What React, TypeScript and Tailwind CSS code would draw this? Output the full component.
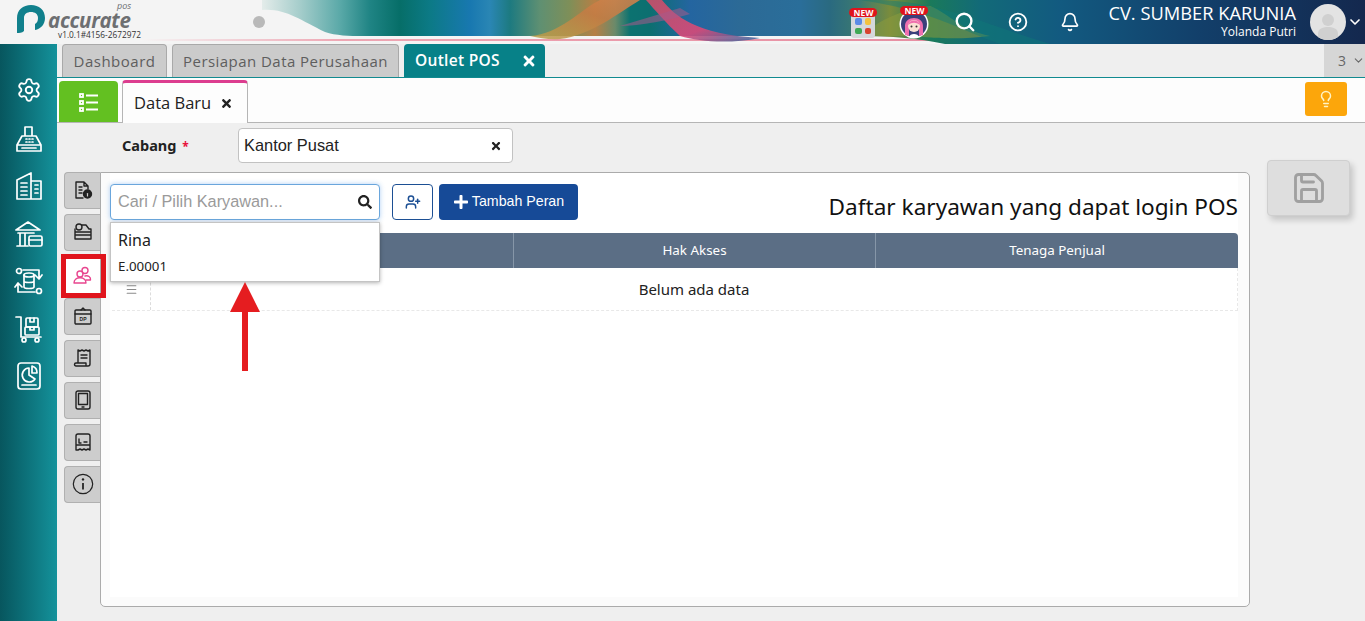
import { Bell, ChevronDown, CircleHelp, Lightbulb, Menu, Save, Search, Settings, UserPlus } from 'lucide-react'
import { FaPlus, FaSearch, FaTimes } from 'react-icons/fa'

const iconCls = 'h-[30px] w-[30px]'

const waveStops: [number, string][] = [
  [262, '#e4ecea'], [300, '#a5cdcb'], [340, '#5aa9a8'], [370, '#1f8484'], [400, '#066e68'],
  [430, '#0c7a86'], [470, '#1878b0'], [490, '#2a86b4'], [510, '#1d7a80'], [540, '#5f9072'],
  [570, '#7f8f58'], [595, '#b67f45'], [615, '#6b8a6a'], [630, '#0c7270'], [650, '#0c6f70'],
  [690, '#2465a0'], [740, '#2c6a96'], [800, '#2a6e9a'], [830, '#2a6a80'], [860, '#3c7a70'],
  [890, '#7a8c3c'], [930, '#1a7a5a'], [980, '#126a78'], [1060, '#125a80'], [1200, '#123f6a'], [1365, '#14284e'],
]

function HeaderWave() {
  return (
    <svg className="absolute inset-0 h-full w-full" viewBox="0 0 1365 44" preserveAspectRatio="none">
      <defs>
        <linearGradient id="wave" gradientUnits="userSpaceOnUse" x1="262" x2="1365" y1="0" y2="0">
          {waveStops.map(([x, c]) => (
            <stop key={x} offset={(x - 262) / (1365 - 262)} stopColor={c} />
          ))}
        </linearGradient>
        <linearGradient id="pinkLine" x1="0" x2="1" y1="0" y2="0">
          <stop offset="0" stopColor="#f5f5f5" />
          <stop offset="0.25" stopColor="#eea6b3" />
          <stop offset="1" stopColor="#e78ea2" />
        </linearGradient>
        <linearGradient id="orangeBand" x1="0" x2="1" y1="1" y2="0">
          <stop offset="0" stopColor="#b9a24a" />
          <stop offset="0.6" stopColor="#c47c44" />
          <stop offset="1" stopColor="#d9824a" />
        </linearGradient>
        <linearGradient id="pinkBand" x1="0" x2="1" y1="0" y2="1">
          <stop offset="0" stopColor="#c9506a" />
          <stop offset="0.6" stopColor="#d84a78" />
          <stop offset="1" stopColor="#2f6ea6" />
        </linearGradient>
      </defs>
      <rect width="1365" height="44" fill="#f4f4f4" />
      <rect x="140" y="39" width="810" height="2" fill="url(#pinkLine)" />
      <path d="M262 10 C285 8 300 20 325 32 C340 37 360 36 380 36 L860 36 C900 36 925 40 945 44 L1365 44 L1365 0 L262 0 Z" fill="url(#wave)" />
      <path d="M530 36 C560 34 580 10 600 0 L640 0 C620 12 590 36 560 39 C550 40 540 38 530 36 Z" fill="url(#orangeBand)" opacity="0.85" />
      <path d="M646 0 L662 0 C675 16 695 34 760 38 C730 44 700 42 680 36 C665 22 655 10 646 0 Z" fill="url(#pinkBand)" opacity="0.9" />
      <path d="M620 26 C640 20 660 14 680 8 L690 14 C670 20 640 26 620 26 Z" fill="#a85a8a" opacity="0.55" />
      <path d="M860 36 C880 20 900 10 930 6 C950 14 960 30 990 36 C960 40 930 38 915 36 Z" fill="#8c9a3c" opacity="0.55" />
      <path d="M880 0 C940 2 985 24 1050 44 L1000 44 C960 30 930 10 860 0 Z" fill="#0f7a78" opacity="0.45" />
    </svg>
  )
}

function Logo() {
  return (
    <div className="relative z-10 flex h-full w-[150px] shrink-0">
      <svg className="mt-1 ml-4 h-[29px] w-[30px]" viewBox="0 0 30 29">
        <path d="M1 29 L1 14 C1 6 7 1 15 1 C23 1 29 6 29 14 C29 20 25 25 19 26 L19 20 C21 19 22 17 22 14 C22 10 19 8 15 8 C11 8 8 10 8 14 L8 27 C6 29 3 29 1 29 Z" fill="#11808c" />
      </svg>
      <div className="relative ml-[2px] font-['Open_Sans',sans-serif] text-[#6d6f72]">
        <span className="absolute top-[1px] left-[69px] text-[9px] leading-[10px] italic">pos</span>
        <span className="absolute top-[11px] left-0 text-[20.5px] leading-[19px] font-bold italic tracking-[-0.3px]">accurate</span>
        <span className="absolute top-[30px] left-[10px] text-[8.3px] leading-[10px] whitespace-nowrap text-[#333]">v1.0.1#4156-2672972</span>
      </div>
    </div>
  )
}

function NewBadge() {
  return (
    <span className="absolute top-0 left-1/2 -translate-x-1/2 rounded-full bg-[#e0141c] px-[4px] font-['Open_Sans',sans-serif] text-[8.5px] leading-[9px] font-bold text-white">
      NEW
    </span>
  )
}

function HeaderBar() {
  return (
    <header className="relative flex h-11 shrink-0 items-center overflow-hidden">
      <HeaderWave />
      <Logo />
      <span className="relative ml-[103px] h-3 w-3 rounded-full bg-[#b9b9b9]" />
      <div className="relative ml-auto flex h-full items-center text-white">
        <div className="relative mt-[2px] flex h-[30px] w-[24px] items-end">
          <NewBadge />
          <div className="grid h-[24px] w-[24px] grid-cols-2 gap-[3px] rounded-[3px] bg-[#d5d8dc] p-[4px]">
            <span className="rounded-[2px] bg-[#5a8ae6]" />
            <span className="rounded-[2px] bg-[#f3c23e]" />
            <span className="rounded-[2px] bg-[#3fa855]" />
            <span className="rounded-[2px] bg-[#d8432f]" />
          </div>
        </div>
        <div className="relative mt-[2px] ml-[24px] h-[34px] w-[30px]">
          <svg className="absolute top-[3px] left-0 h-[30px] w-[30px]" viewBox="0 0 30 30">
            <circle cx="15" cy="15" r="14.5" fill="#fff" />
            <circle cx="15" cy="15" r="13" fill="#3b3f7a" />
            <path d="M6 18 C5 6 25 6 24 18 L24 26 L20 27 L20 16 L10 16 L10 27 L6 26 Z" fill="#ee6fae" />
            <circle cx="15" cy="17" r="6" fill="#fbe0d4" />
            <path d="M9 16 C10 10 20 10 21 16 C17 13 13 13 9 16 Z" fill="#ee6fae" />
            <path d="M10 28 C11 24 19 24 20 28 Z" fill="#fff" />
            <circle cx="12.5" cy="17.5" r="1" fill="#333" />
            <circle cx="17.5" cy="17.5" r="1" fill="#333" />
          </svg>
          <NewBadge />
        </div>
        <Search className="ml-[25px] h-[22px] w-[22px]" strokeWidth={2.6} />
        <CircleHelp className="ml-[32px] h-[20px] w-[20px]" strokeWidth={2.2} />
        <Bell className="ml-[32px] h-[20px] w-[20px]" strokeWidth={2} />
        <div className="-mt-[2px] ml-[28px] flex flex-col items-end font-['Open_Sans',sans-serif]">
          <span className="text-[18.3px] leading-[22px] whitespace-nowrap">CV. SUMBER KARUNIA</span>
          <span className="text-[12px] leading-[16px] whitespace-nowrap">Yolanda Putri</span>
        </div>
        <div className="ml-[14px] flex h-9 w-9 items-end justify-center overflow-hidden rounded-full bg-[#e3e3e3]">
          <svg className="h-[28px] w-[24px]" viewBox="0 0 24 28" fill="#d0d0d0">
            <circle cx="12" cy="8" r="6" />
            <path d="M2 28 L2 22 C2 17 6 15 12 15 C18 15 22 17 22 22 L22 28 Z" />
          </svg>
        </div>
        <ChevronDown className="mr-[2px] ml-[1px] h-[16px] w-[16px]" strokeWidth={2.5} />
      </div>
    </header>
  )
}

function NavIcon({ children }: { children: React.ReactNode }) {
  return (
    <svg className={iconCls} viewBox="0 0 30 30" fill="none" stroke="#fff" strokeWidth="1.7" strokeLinejoin="round" strokeLinecap="round">
      {children}
    </svg>
  )
}

function Sidebar() {
  return (
    <aside className="flex w-[57px] shrink-0 flex-col items-center gap-[17.5px] bg-gradient-to-r from-[#07565e] to-[#14929b] pt-[33px]">
      <Settings className="mb-[3px] h-[26px] w-[26px] text-white" strokeWidth={1.7} />
      <NavIcon>
        <path d="M11 3 H18 V12 H11 Z M8 12 H22 L27 21 H3 Z M3 21 V27 H27 V21 M8 24 H22" />
        <path d="M12 15 H13 M15 15 H16 M18 15 H19 M12 18 H13 M15 18 H16 M18 18 H19" />
      </NavIcon>
      <NavIcon>
        <path d="M3 28 V9 L17 2 V28 M17 10 H27 V28 H3 M7 12 H13 M7 16 H13 M7 20 H13 M7 24 H13 M21 14 H24 M21 18 H24 M21 22 H24" />
      </NavIcon>
      <NavIcon>
        <path d="M2 11 L14 3 L26 11 Z M4 14 H20 M6 14 V26 M11 14 V26 M3 27 H14" />
        <rect x="15" y="17" width="13" height="10" rx="1.5" />
        <path d="M15 21 H28" />
      </NavIcon>
      <NavIcon>
        <ellipse cx="15" cy="9" rx="5" ry="2" />
        <path d="M10 9 V21 C10 23 20 23 20 21 V9 M10 15 C10 17 20 17 20 15" />
        <circle cx="5" cy="5" r="2.5" />
        <circle cx="25" cy="25" r="2.5" />
        <path d="M9 4 H25 V12 M21 9 L25 13 L28 9 M21 26 H4 V18 M1 21 L4 17 L8 21" />
      </NavIcon>
      <NavIcon>
        <path d="M2 3 H7 V23 H27" />
        <rect x="12" y="4" width="12" height="9" rx="1" />
        <rect x="11" y="13" width="14" height="8" rx="1" />
        <path d="M16 4 V8 H20 V4 M16 13 V16 H20 V13" />
        <circle cx="10" cy="26" r="2" />
        <circle cx="23" cy="26" r="2" />
      </NavIcon>
      <NavIcon>
        <rect x="4" y="2" width="22" height="26" rx="3" />
        <path d="M8 24 H22 M15 7 A7 7 0 1 0 21 18 L15 14 Z M18 5 A7 7 0 0 1 23 12 H18 Z" />
      </NavIcon>
    </aside>
  )
}

function TabsRow() {
  return (
    <div className="flex h-[34px] shrink-0 items-end gap-[5px] border-b border-[#118a90] pl-[5px] font-['Open_Sans',sans-serif]">
      <div className="flex h-[33px] w-[105px] items-center justify-center rounded-t-[4px] border border-b-0 border-[#a9a9a9] bg-[#cbcbcb] text-[15px] tracking-[0.5px] text-[#5e5e5e]">
        Dashboard
      </div>
      <div className="flex h-[33px] w-[227px] items-center justify-center rounded-t-[4px] border border-b-0 border-[#a9a9a9] bg-[#cbcbcb] text-[15px] tracking-[0.45px] text-[#5e5e5e]">
        Persiapan Data Perusahaan
      </div>
      <div className="flex h-[33px] w-[141px] items-center rounded-t-[4px] bg-[#078188] pl-[11px] text-[15.5px] font-semibold tracking-[0.3px] text-white">
        Outlet POS
        <FaTimes className="ml-[21px] h-[16px] w-[16px]" />
      </div>
      <div className="ml-auto flex h-[33px] w-[41px] items-center gap-[6px] bg-[#d6d6d6] pl-[14px] text-[14px] text-[#666]">
        3
        <ChevronDown className="h-[13px] w-[13px]" />
      </div>
    </div>
  )
}

function SubTabs() {
  return (
    <div className="flex h-[45px] shrink-0 items-end border-b border-[#b5b5b5] bg-[#fdfdfd] pl-[2px] font-['Open_Sans',sans-serif]">
      <div className="flex h-[41px] w-[59px] items-center justify-center rounded-t-[4px] bg-[#63c021]">
        <svg className="h-[20px] w-[20px]" viewBox="0 0 20 20" fill="none" stroke="#fff" strokeWidth="1.8">
          <rect x="1" y="2" width="3" height="3" />
          <rect x="1" y="9" width="3" height="3" />
          <rect x="1" y="16" width="3" height="3" />
          <path d="M7 3.5 H19 M7 10.5 H19 M7 17.5 H19" />
        </svg>
      </div>
      <div className="mb-[-1px] ml-[4px] flex h-[43px] w-[126px] items-center rounded-t-[4px] border-x border-[#b5b5b5] border-t-[3px] border-t-[#dc3d8f] bg-[#fdfdfd] pl-[11px] text-[16.5px] text-[#222]">
        Data Baru
        <FaTimes className="ml-[9px] h-[13px] w-[13px] text-[#222]" />
      </div>
      <div className="mr-[18px] mb-[6px] ml-auto flex h-[34px] w-[42px] items-center justify-center rounded-[3px] bg-[#fca60b]">
        <Lightbulb className="h-[18px] w-[18px] text-[#fff3c4]" />
      </div>
    </div>
  )
}

function SideTab({ children, active }: { children: React.ReactNode; active?: boolean }) {
  return (
    <div
      className={
        active
          ? 'relative flex h-[37px] w-[36px] items-center justify-center bg-white'
          : 'flex h-[37px] w-[36px] items-center justify-center rounded-l-[4px] border border-r-0 border-[#b0b0b0] bg-[#cdcdcd] pb-[2px]'
      }
    >
      {children}
      {active && <span className="absolute -top-[2px] -left-[3px] z-10 h-[44px] w-[45px] border-[5px] border-[#e0141c]" />}
    </div>
  )
}

function TabIcon({ children, stroke = '#222' }: { children: React.ReactNode; stroke?: string }) {
  return (
    <svg className="h-[20px] w-[20px]" viewBox="0 0 20 20" fill="none" stroke={stroke} strokeWidth="1.4" strokeLinejoin="round" strokeLinecap="round">
      {children}
    </svg>
  )
}

function SideTabs() {
  return (
    <div className="flex w-[36px] shrink-0 flex-col gap-[5px]">
      <SideTab>
        <TabIcon>
          <path d="M10 18 H3 V2 H11 L15 6 V9 M11 2 V6 H15 M6 7 H9 M6 10 H9 M6 13 H9" />
          <circle cx="14.5" cy="14" r="4" fill="#222" />
          <path d="M14.5 13.5 V16" stroke="#cdcdcd" strokeWidth="1.2" />
        </TabIcon>
      </SideTab>
      <SideTab>
        <TabIcon>
          <circle cx="6" cy="5" r="3" />
          <path d="M9 3 H13 L16 7 H18 V10 H2 V7 M2 10 V17 H18 V10 M2 13 H18" />
        </TabIcon>
      </SideTab>
      <SideTab active>
        <TabIcon stroke="#e8468f">
          <circle cx="8" cy="9" r="3" />
          <circle cx="13" cy="5.5" r="3" />
          <path d="M2 18 C2 11 14 11 14 18 Z M13 11 C16 10 19 12 18.5 15 H14" />
        </TabIcon>
      </SideTab>
      <SideTab>
        <TabIcon>
          <rect x="2" y="4" width="16" height="14" rx="1" />
          <path d="M2 8 H18 M8 4 L10 2 L12 4" />
          <text x="10" y="15" fontSize="5" fontWeight="700" textAnchor="middle" fill="#222" stroke="none" fontFamily="Liberation Sans, sans-serif">DP</text>
        </TabIcon>
      </SideTab>
      <SideTab>
        <TabIcon>
          <path d="M5 15 V2 L7 3 L9 2 L11 3 L13 2 L15 3 L17 2 V16 C17 18 15 18 15 18 H3 C1 18 1 15 3 15 H13 V18 M8 7 H14 M8 10 H14" />
        </TabIcon>
      </SideTab>
      <SideTab>
        <TabIcon>
          <rect x="3" y="1" width="14" height="18" rx="2" />
          <rect x="5.5" y="3.5" width="9" height="11" />
          <path d="M9 17 H11" />
        </TabIcon>
      </SideTab>
      <SideTab>
        <TabIcon>
          <path d="M3 18 V4 C3 3 4 2 5 2 H15 C16 2 17 3 17 4 V18 L15 17 L13 18 L11 17 L9 18 L7 17 L5 18 Z M3 13 H17 M6 7 V11 H8 M11 10 H14" />
        </TabIcon>
      </SideTab>
      <SideTab>
        <svg className="h-[22px] w-[22px]" viewBox="0 0 20 20" fill="none" stroke="#222" strokeWidth="1.1">
          <circle cx="10" cy="10" r="8.8" />
          <path d="M10 9 V15" strokeWidth="1.6" />
          <circle cx="10" cy="5.8" r="1.1" fill="#222" stroke="none" />
        </svg>
      </SideTab>
    </div>
  )
}

function EmployeeTable() {
  return (
    <div className="mt-[13px] ml-[2px] font-['Noto_Sans',sans-serif]">
      <div className="grid h-[35px] grid-cols-[401px_362px_363px] items-center rounded-t-[4px] bg-[#5b6e85] text-[13.4px] text-white">
        <span />
        <span className="flex h-full items-center justify-center border-l border-[#8696a8]">Hak Akses</span>
        <span className="flex h-full items-center justify-center border-l border-[#8696a8]">Tenaga Penjual</span>
      </div>
      <div className="flex h-[43px] border-r border-b border-r-[#e8e8e8] border-b-[#e8e8e8] border-dashed">
        <div className="flex w-[39px] items-center justify-center border-r border-dashed border-[#dcdcdc] text-[#8a8a8a]">
          <Menu className="h-[13px] w-[13px]" />
        </div>
        <div className="flex-1 text-center text-[15px] leading-[43px] text-[#222]">Belum ada data</div>
      </div>
    </div>
  )
}

function Panel() {
  return (
    <section className="flex h-[435px] w-[1150px] flex-col rounded-r-[5px] rounded-bl-[5px] border border-[#ababab] bg-[#fbfbfb] pr-[11px] pb-[9px] pl-[9px]">
      <div className="flex-1 bg-white pt-[11px]">
        <div className="relative flex h-[36px] items-start">
          <div className="flex h-[36px] w-[270px] items-center rounded-[4px] border border-[#6aa6dc] bg-white pr-[7px] pl-[7px] shadow-[0_0_5px_rgba(80,150,230,0.45)]">
            <span className="-mt-[1px] font-['Liberation_Sans',sans-serif] text-[16.3px] text-[#9a9a9a]">Cari / Pilih Karyawan...</span>
            <FaSearch className="ml-auto h-[14px] w-[14px] text-[#222]" />
          </div>
          <button className="ml-[12px] flex h-[36px] w-[41px] items-center justify-center rounded-[4px] border border-[#1c4f94] bg-white">
            <UserPlus className="h-[16px] w-[16px] text-[#1c4f94]" strokeWidth={2.2} />
          </button>
          <button className="ml-[6px] flex h-[36px] w-[139px] items-center justify-center gap-[3px] rounded-[4px] bg-[#164a97] font-['Liberation_Sans',sans-serif] text-[14.2px] text-white">
            <FaPlus className="h-[16px] w-[16px]" />
            Tambah Peran
          </button>
          <h2 className="mt-[6px] ml-auto font-['Noto_Sans',sans-serif] text-[22.6px] leading-[34px] text-[#111]">Daftar karyawan yang dapat login POS</h2>

          {/* dropdown + arrow sit over the table */}
          <div className="absolute top-[38px] left-0 z-10 h-[60px] w-[270px] border border-[#c4c4c4] bg-white pt-[7px] pl-[7px] font-['Noto_Sans',sans-serif] text-[#222] shadow-[0_1px_4px_rgba(0,0,0,0.3)]">
            <div className="text-[16px] leading-[20px]">Rina</div>
            <div className="mt-[8px] text-[13.3px] leading-[16px]">E.00001</div>
          </div>
          <svg className="absolute top-[98px] left-[119px] z-20 h-[90px] w-[32px]" viewBox="0 0 32 90" fill="#e51d20">
            <path d="M16 0 L31 30 L19 30 L19 89 L13 89 L13 30 L1 30 Z" />
          </svg>
        </div>
        <EmployeeTable />
      </div>
    </section>
  )
}

export default function App() {
  return (
    <div className="flex h-[621px] w-[1365px] flex-col overflow-hidden bg-[#efefef]">
      <HeaderBar />
      <div className="flex min-h-0 flex-1">
        <Sidebar />
        <main className="flex min-w-0 flex-1 flex-col">
          <TabsRow />
          <SubTabs />
          <div className="flex h-[49px] shrink-0 items-start pt-[5px] pl-[65px]">
            <span className="mt-[7px] w-[116px] font-['Noto_Sans',sans-serif] text-[14.5px] leading-[20px] font-bold text-[#222]">
              Cabang <span className="ml-[2px] text-[12px] text-[#e8123c]">*</span>
            </span>
            <div className="flex h-[35px] w-[275px] items-center rounded-[4px] border border-[#c2c2c2] bg-white pr-[10px] pl-[5px] font-['Liberation_Sans',sans-serif] text-[16.4px] text-[#222]">
              Kantor Pusat
              <FaTimes className="ml-auto h-[12px] w-[12px] text-[#222]" />
            </div>
          </div>
          <div className="flex pl-[7px]">
            <SideTabs />
            <Panel />
            <button className="mt-[-12px] ml-[17px] flex h-[56px] w-[83px] items-center justify-center self-start rounded-[4px] border border-[#cfcfcf] bg-[#dedede] shadow-[3px_4px_6px_rgba(0,0,0,0.18)]">
              <Save className="h-[36px] w-[36px] text-[#a0a0a0]" strokeWidth={1.9} />
            </button>
          </div>
        </main>
      </div>
    </div>
  )
}
